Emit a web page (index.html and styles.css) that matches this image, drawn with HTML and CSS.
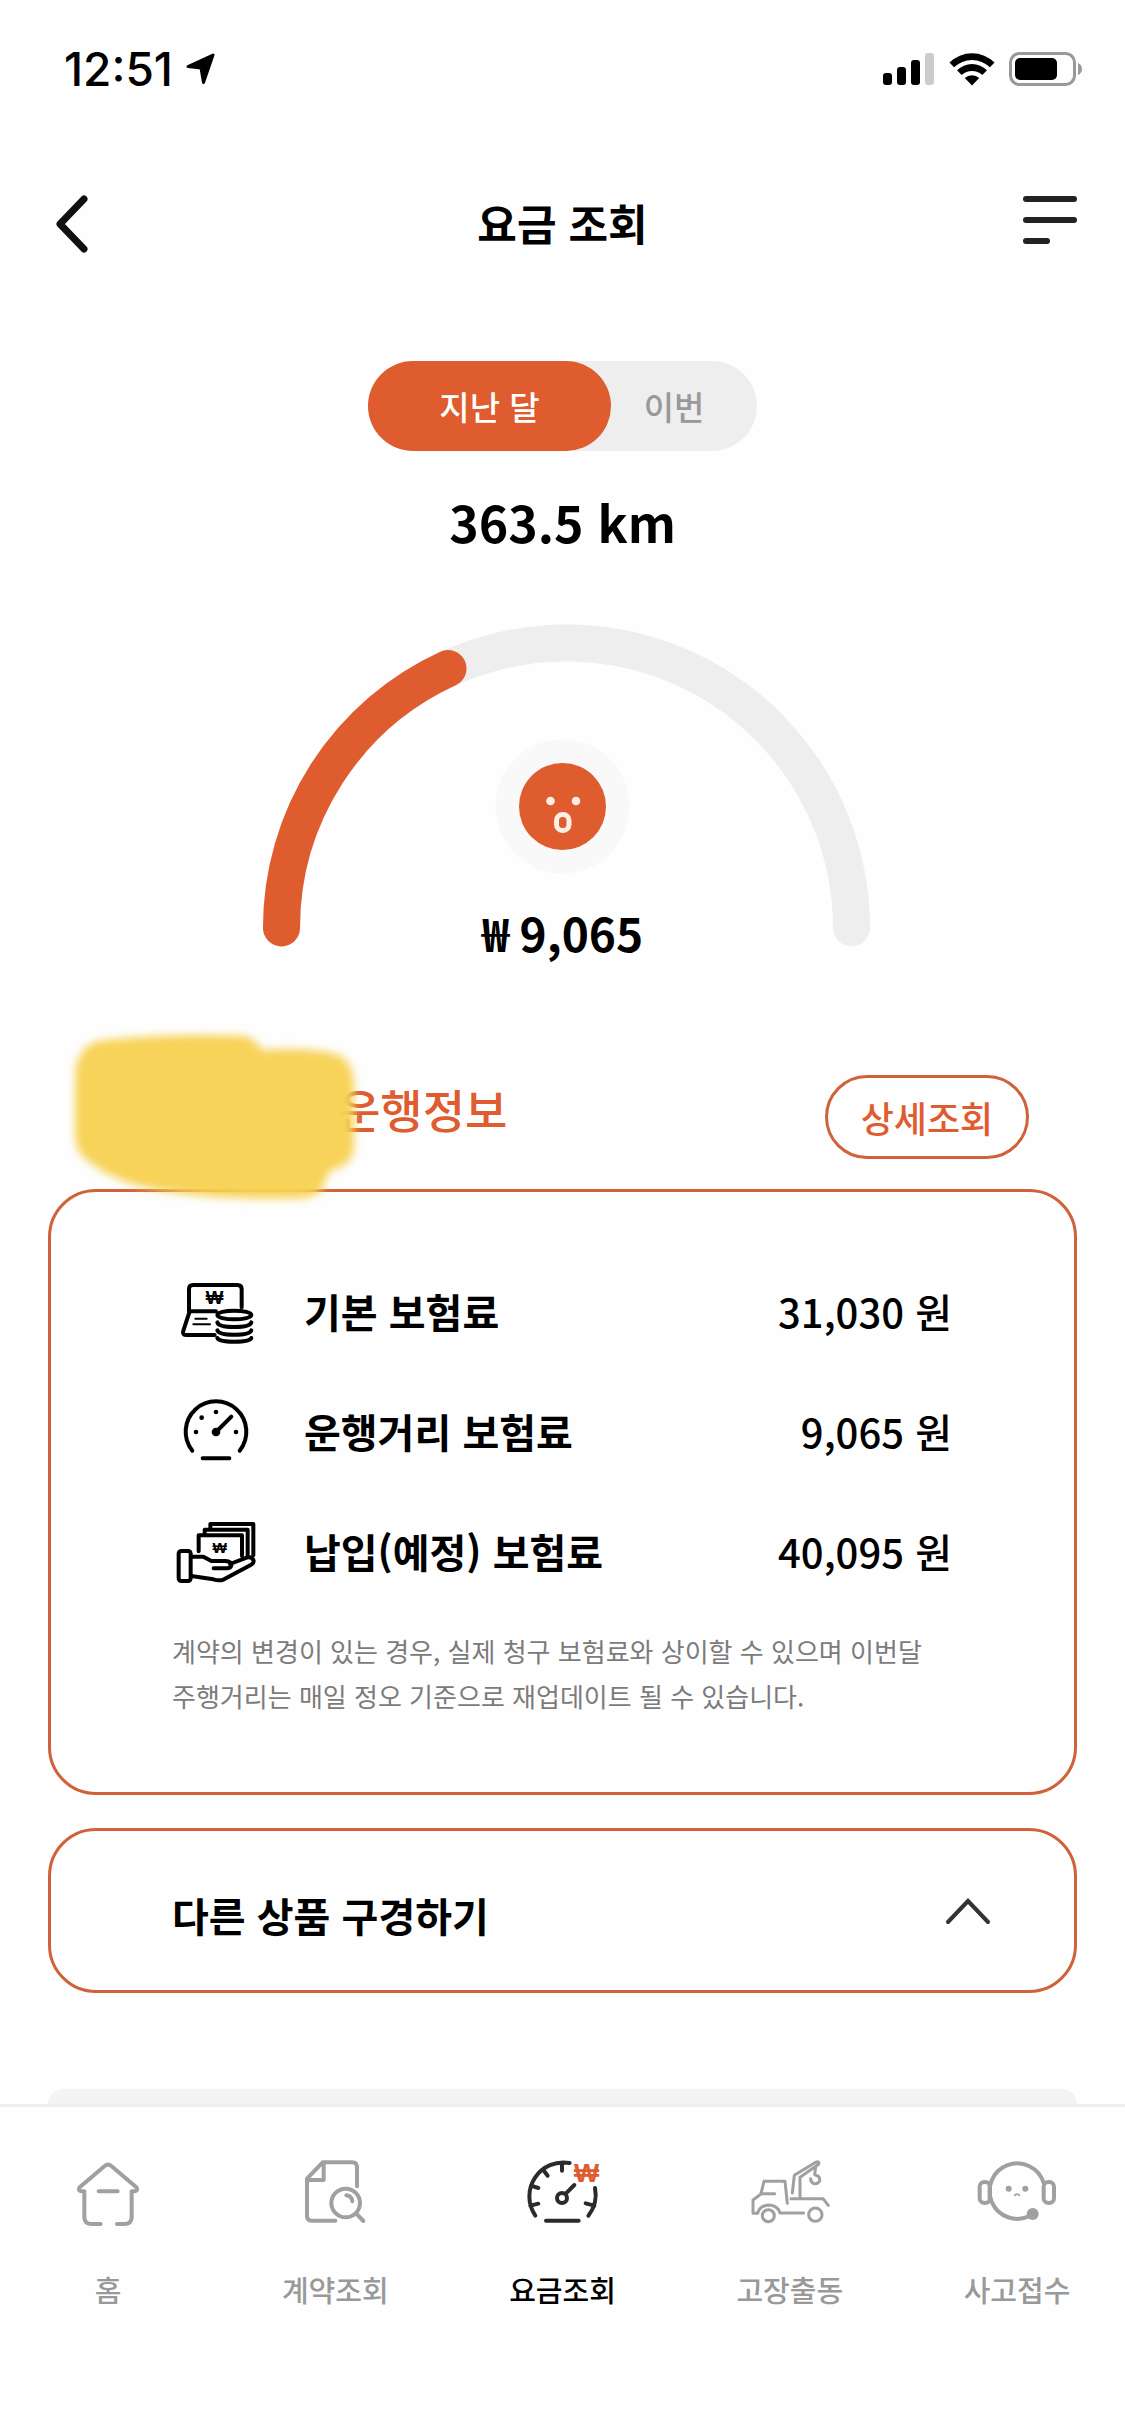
FILE: index.html
```html
<!DOCTYPE html>
<html lang="ko">
<head>
<meta charset="utf-8">
<meta name="viewport" content="width=device-width, initial-scale=1">
<title>요금 조회</title>
<link rel="stylesheet" href="styles.css">
</head>
<body>
<div class="status">
  <div class="status-group">
    <span class="clock">12:51</span>
    <svg class="location" viewBox="0 0 30 32" aria-hidden="true"><path d="M28 2L18.500 29.500L16 15L3 13.500Z" fill="#000" stroke="#000" stroke-width="3" stroke-linejoin="round"/></svg>
  </div>
  <div class="status-group status-icons">
    <svg width="52" height="34" viewBox="0 0 52 34" aria-hidden="true">
      <rect x="0" y="21" width="9" height="12" rx="3"/><rect x="14" y="15" width="9" height="18" rx="3"/><rect x="28" y="8" width="9" height="25" rx="3"/><rect x="42" y="1" width="9" height="32" rx="3" fill="#ccc"/>
    </svg>
    <svg width="46" height="34" viewBox="0 0 46 34" aria-hidden="true">
      <path d="M0.500 10.500a32 32 0 0 1 45 0l-4.500 4.800a26 26 0 0 0-36 0z"/>
      <path d="M8 18.200a21.500 21.500 0 0 1 30 0l-4.700 4.800a15 15 0 0 0-20.600 0z"/>
      <path d="M15.800 26a10.500 10.500 0 0 1 14.400 0L23 33.500z"/>
    </svg>
    <svg width="74" height="34" viewBox="0 0 74 34" aria-hidden="true">
      <rect x="1.500" y="1.500" width="64" height="31" rx="9" fill="none" stroke="#999" stroke-width="3"/>
      <rect x="6" y="6" width="42" height="22" rx="5"/><path d="M69 11q4 2 4 6t-4 6z" fill="#999"/>
    </svg>
  </div>
</div>

<header class="header">
  <button class="icon-button" aria-label="뒤로">
    <svg width="42" height="60" viewBox="0 0 42 60" aria-hidden="true"><path d="M36 5L12 30L36 55" fill="none" stroke="#111" stroke-width="7" stroke-linecap="round" stroke-linejoin="round"/></svg>
  </button>
  <h1 class="title">요금 조회</h1>
  <button class="icon-button" aria-label="메뉴">
    <svg width="54" height="60" viewBox="0 0 54 60" aria-hidden="true" fill="#222"><rect y="2" width="54" height="6" rx="3"/><rect y="23" width="54" height="6" rx="3"/><rect y="44" width="27" height="6" rx="3"/></svg>
  </button>
</header>

<main class="main">
  <div class="toggle">
    <button class="toggle-option is-active" aria-pressed="true">지난 달</button>
    <button class="toggle-option" aria-pressed="false">이번</button>
  </div>
  <p class="distance">363.5 km</p>

  <div class="gauge">
    <svg class="gauge-dial" viewBox="252 620 621 350" aria-hidden="true">
      <path d="M281.500 928a285 285 0 0 1 570 0" fill="none" stroke="#eee" stroke-width="37" stroke-linecap="round"/>
      <path d="M281.500 928A285 285 0 0 1 448 668.500" fill="none" stroke="#de5c2e" stroke-width="37" stroke-linecap="round"/>
      <circle cx="562.500" cy="806.500" r="67" fill="#f9f9f9"/>
      <circle cx="562.500" cy="806.500" r="43.500" fill="#de5c2e"/>
      <circle cx="550.500" cy="801" r="4.300" fill="#fdeee8"/><circle cx="576" cy="801" r="4.300" fill="#fdeee8"/>
      <rect x="556.500" y="814.500" width="12.500" height="16" rx="6" fill="none" stroke="#fdeee8" stroke-width="5"/>
    </svg>
    <p class="price">₩ 9,065</p>
  </div>

  <div class="section-head">
    <h2 class="section-title">
      <span class="masked-name">
        <svg class="mask" viewBox="0 0 300 180" aria-hidden="true">
          <path d="M16 30Q22 14 42 13Q110 6 182 9Q192 13 198 23Q240 20 268 26Q290 30 290 60V122Q286 140 270 142Q262 146 260 158Q256 170 238 171Q140 174 80 160Q46 152 24 134Q12 126 11 110V56Q11 34 16 30Z"/>
        </svg>
      </span>운행정보</h2>
    <button class="detail-button">상세조회</button>
  </div>

  <section class="card fees">
    <table class="fee-table">
      <tr>
        <td class="fee-icon">
          <svg viewBox="66 54 264 216" aria-hidden="true" class="line-icon">
            <path d="M117 153V87Q117 75 129 75H262Q275 75 275 87V142"/>
            <path d="M198 154H119L100 212Q96 225 110 225H194"/>
            <path d="M136 176H170M130 193H180" stroke-width="6"/>
            <ellipse cx="253" cy="165" rx="51" ry="13"/>
            <path d="M202 187Q206 201 253 201T304 187M202 211Q206 224 253 224T304 211M202 234Q206 245 253 245T304 234"/>
            <text x="194" y="133" class="won" font-size="56">₩</text>
          </svg>
        </td>
        <th scope="row">기본 보험료</th><td class="fee-value">31,030 원</td>
      </tr>
      <tr>
        <td class="fee-icon">
          <svg viewBox="66 414 264 216" aria-hidden="true" class="line-icon">
            <path d="M127 572A91 91 0 1 1 269 572"/><path d="M158 595H238M198 516L244 470"/>
            <g class="dots"><circle cx="198" cy="516" r="13"/><circle cx="138" cy="516" r="7"/><circle cx="155" cy="473" r="7"/><circle cx="198" cy="456" r="7"/><circle cx="258" cy="516" r="7"/></g>
          </svg>
        </td>
        <th scope="row">운행거리 보험료</th><td class="fee-value">9,065 원</td>
      </tr>
      <tr>
        <td class="fee-icon">
          <svg viewBox="66 774 264 216" aria-hidden="true" class="line-icon">
            <rect x="86" y="873" width="36" height="90" rx="8"/>
            <path d="M146 874V826H276V888M164 820V809H293V888M181 803V792H310V886"/>
            <path d="M124 890H160L184 903H226Q244 904 244 916Q242 925 230 925H191M240 912L292 892Q308 890 311 903Q311 910 302 915L222 958Q208 964 190 958L124 948"/>
            <text x="209" y="879" class="won" font-size="46">₩</text>
          </svg>
        </td>
        <th scope="row">납입(예정) 보험료</th><td class="fee-value">40,095 원</td>
      </tr>
    </table>
    <p class="note">계약의 변경이 있는 경우, 실제 청구 보험료와 상이할 수 있으며 이번달<br>주행거리는 매일 정오 기준으로 재업데이트 될 수 있습니다.</p>
  </section>

  <button class="card more" aria-expanded="false">
    <span class="more-label">다른 상품 구경하기</span>
    <svg width="48" height="30" viewBox="0 0 48 30" aria-hidden="true"><path d="M4 26L24 5L44 26" fill="none" stroke="#333" stroke-width="4" stroke-linecap="round"/></svg>
  </button>

  <div class="next-panel"></div>
</main>

<nav class="tabs">
  <a class="tab" href="#home">
    <svg viewBox="72 54 264 264" aria-hidden="true" class="tab-icon">
      <path d="M133 184H124Q112 181 119 172L194 108Q204 100 214 108L289 172Q296 181 284 184H275V264Q273 281 256 282H231M133 184V264Q135 281 152 282H182M176 184H233"/>
    </svg>
    <span>홈</span>
  </a>
  <a class="tab" href="#contract">
    <svg viewBox="753 54 264 264" aria-hidden="true" class="tab-icon">
      <path d="M951 169V112Q951 97 936 97H848L801 146V258Q801 272 815 272H886M851 97V150H802"/>
      <circle cx="917" cy="219" r="43"/><path d="M949 251L970 273M919 196Q935 198 937 214"/>
    </svg>
    <span>계약조회</span>
  </a>
  <a class="tab is-current" href="#fare" aria-current="page">
    <svg viewBox="115 54 264 264" aria-hidden="true" class="tab-icon">
      <path d="M164 257A102 102 0 0 1 267 99M343 174A102 102 0 0 1 323 257M196 272H294M244 98V122M188 120L201 137M151 167L173 174M149 227L173 221M341 227L315 220M256 190L281 165"/>
      <circle cx="244" cy="204" r="15"/>
      <text x="318" y="156" class="won won-accent" font-size="80">₩</text>
    </svg>
    <span>요금조회</span>
  </a>
  <a class="tab" href="#tow">
    <svg viewBox="797 54 264 264" aria-hidden="true" class="tab-icon thin">
      <path d="M883 191H842L851 154H914L921 220M842 192L818 210V250H832Q838 226 866 225Q892 226 899 249H970"/>
      <circle cx="864" cy="257" r="18"/><circle cx="1005" cy="254" r="20"/>
      <path d="M932 206H1028L1044 226M959 204V142L1015 103Q1018 92 1006 97L942 136L936 189M1006 110L1003 134Q1021 138 1018 153Q1010 165 999 160Q990 155 991 146"/>
    </svg>
    <span>고장출동</span>
  </a>
  <a class="tab" href="#accident">
    <svg viewBox="339 54 264 264" aria-hidden="true" class="tab-icon">
      <path d="M510 257A83 83 0 1 1 551 159M389 160V212"/>
      <rect x="359" y="156" width="31" height="63" rx="14"/><rect x="551" y="156" width="31" height="63" rx="14"/>
      <path d="M464 196Q471 189 478 196" stroke-width="5"/>
      <g class="dots"><circle cx="446" cy="176" r="9"/><circle cx="496" cy="176" r="9"/><circle cx="518" cy="252" r="18"/></g>
    </svg>
    <span>사고접수</span>
  </a>
</nav>
</body>
</html>
```
FILE: styles.css
```css
* { box-sizing: border-box; }

body {
  margin: 0;
  min-height: 100vh;
  display: flex;
  flex-direction: column;
  background: #fefefe;
  color: #000;
  font-family: "Noto Sans CJK KR", sans-serif;
}

h1, h2, p { margin: 0; }

button {
  padding: 0;
  border: 0;
  background: none;
  color: inherit;
  font: inherit;
  cursor: pointer;
}

svg { display: block; }

.status {
  display: flex;
  justify-content: space-between;
  align-items: center;
  padding: 44px 42px 90px 64px;
}
.status-group { display: flex; align-items: center; gap: 12px; }
.status-icons { gap: 14px; }
.clock {
  font-family: Inter, sans-serif;
  font-size: 46px;
  font-weight: 500;
  line-height: 50px;
}
.location { width: 30px; height: 32px; }

.header {
  display: flex;
  justify-content: space-between;
  align-items: center;
  height: 80px;
  padding: 0 48px;
}
.icon-button { width: 54px; }
.title { font-size: 43px; font-weight: 700; line-height: 76px; padding-bottom: 4px; }

.main {
  flex: 1;
  display: flex;
  flex-direction: column;
  padding: 97px 48px 0;
}

.toggle {
  align-self: center;
  display: grid;
  grid-template-columns: 243px 146px;
  height: 90px;
  border-radius: 45px;
  background: #eee;
}
.toggle-option {
  padding-right: 20px;
  color: #999;
  font-size: 33px;
  font-weight: 500;
}
.toggle-option.is-active {
  padding-right: 0;
  border-radius: 45px;
  background: #de5c2e;
  color: #fff;
}

.distance {
  margin-top: 40px;
  font-size: 50px;
  font-weight: 700;
  line-height: 60px;
  text-align: center;
}

.gauge { display: grid; justify-content: center; margin-top: 69px; }
.gauge-dial { grid-area: 1 / 1; width: 621px; height: 350px; }
.price {
  grid-area: 1 / 1;
  align-self: end;
  padding-bottom: 8px;
  font-size: 46px;
  font-weight: 700;
  line-height: 60px;
  text-align: center;
}

.section-head {
  display: flex;
  justify-content: space-between;
  margin-top: 105px;
  padding: 0 48px 0 24px;
}
.section-title {
  display: flex;
  color: #de5c2e;
  font-size: 46px;
  font-weight: 500;
  line-height: 66px;
}
.masked-name { position: relative; width: 266px; }
.mask {
  position: absolute;
  left: -8px;
  top: -48px;
  width: 300px;
  height: 180px;
  overflow: visible;
  fill: #f7d254;
  fill-opacity: 0.97;
  filter: blur(4px);
}
.detail-button {
  width: 204px;
  height: 84px;
  border: 3px solid #d0623a;
  border-radius: 42px;
  color: #de5c2e;
  font-size: 36px;
  font-weight: 500;
}

.card {
  border: 3px solid #d0623a;
  border-radius: 48px;
}
.fees { margin-top: 30px; padding: 62px 122px 72px 121px; }
.fee-table { width: 100%; border-collapse: collapse; }
.fee-table tr { height: 120px; }
.fee-table td, .fee-table th { padding: 0; font-size: 40px; line-height: 60px; }
.fee-table th, .fee-table .fee-value { padding-bottom: 6px; }
.fee-table th { font-weight: 700; text-align: left; }
.fee-table .fee-icon { width: 132px; }
.fee-icon svg { width: 88px; height: 72px; }
.fee-value { font-weight: 500; text-align: right; }

.line-icon, .tab-icon {
  fill: none;
  stroke: currentColor;
  stroke-width: 12px;
  stroke-linecap: round;
  stroke-linejoin: round;
}
.dots, .won { fill: currentColor; stroke: none; }
.won {
  font-family: "Liberation Sans", sans-serif;
  font-weight: 700;
  text-anchor: middle;
}
.won-accent { fill: #de5c2e; }

.note {
  margin-top: 14px;
  margin-bottom: 2px;
  color: #7b7b7b;
  font-size: 26px;
  line-height: 45px;
}

.more {
  display: flex;
  justify-content: space-between;
  align-items: center;
  min-height: 165px;
  margin-top: 33px;
  padding: 0 82px 0 121px;
  font-size: 40px;
  font-weight: 700;
}
.more-label { padding-top: 8px; }

.next-panel {
  flex: 1;
  min-height: 15px;
  margin-top: 96px;
  border-radius: 24px 24px 0 0;
  background: #f4f4f4;
}

.tabs {
  display: flex;
  justify-content: space-between;
  padding: 41px 0 126px;
  border-top: 3px solid #eee;
}
.tab {
  display: flex;
  flex-direction: column;
  align-items: center;
  gap: 32px;
  width: 216px;
  color: #a0a0a0;
  font-size: 29px;
  font-weight: 500;
  line-height: 42px;
  text-decoration: none;
}
.tab span { color: #999; }
.tab.is-current { color: #2b2b2b; }
.tab.is-current span { color: #000; }
.tab-icon { width: 88px; height: 88px; }
.tab-icon.thin { stroke-width: 9px; }
```
